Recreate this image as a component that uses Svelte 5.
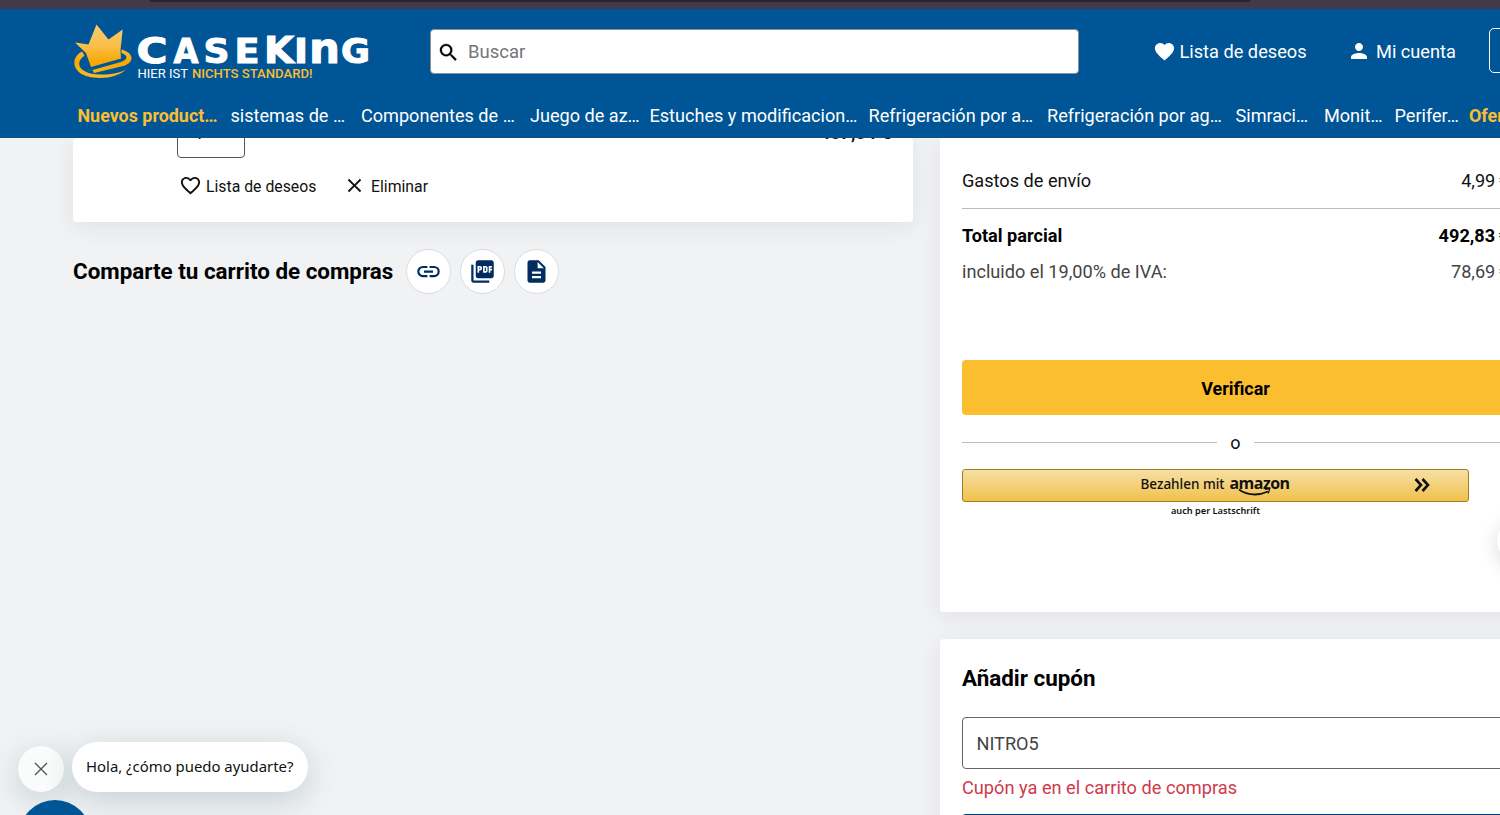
<script>
  const nav = [
    { t: 'Nuevos product…', x: 153, b: true },
    { t: 'sistemas de …', x: 130.5 },
    { t: 'Componentes de …', x: 169 },
    { t: 'Juego de az…', x: 119.5 },
    { t: 'Estuches y modificacion…', x: 219 },
    { t: 'Refrigeración por a…', x: 178.5 },
    { t: 'Refrigeración por ag…', x: 188.5 },
    { t: 'Simraci…', x: 88.5 },
    { t: 'Monit…', x: 70.5 },
    { t: 'Perifer…', x: 74.5 },
    { t: 'Ofertas', x: 80, b: true }
  ];
  const letters = [
    { c: 'C', x: 63.5, w: 31, s: 36 },
    { c: 'A', x: 100.5, w: 25, s: 33 },
    { c: 'S', x: 130.5, w: 26, s: 33 },
    { c: 'E', x: 161.5, w: 25, s: 33 },
    { c: 'K', x: 191, w: 30, s: 37 },
    { c: 'I', x: 221, w: 14, s: 33 },
    { c: 'n', x: 236, w: 31, s: 42.5 },
    { c: 'G', x: 268, w: 29, s: 33 }
  ];
</script>

<div class="page">
  <div class="chrome"><i></i></div>
  <header>
    <div class="top">
      <svg class="logo" width="300" height="60" viewBox="0 0 300 60">
        <defs>
          <linearGradient id="gold" gradientUnits="userSpaceOnUse" x1="0" y1="0" x2="0" y2="54">
            <stop offset="0" stop-color="#f8cc70" />
            <stop offset=".4" stop-color="#fabf4a" />
            <stop offset=".72" stop-color="#f7a800" />
            <stop offset="1" stop-color="#f8bb2c" />
          </linearGradient>
        </defs>
        <g fill="url(#gold)">
          <path d="M2 18.500 15.500 20.500 23.500.5 35.500 15.500 49.700 5.500 47.500 26 48 34.500 18 43 13 29Z" />
          <path d="M9 27.500C-4 34-2 54 27 54c11 0 20-3 26-8.500C47 49 39 50.500 28 50.500 8 50.500 0 40 11.500 31.500Z" />
          <path d="M48.500 25.500C62 29 62 40 48 42.500L21 49 19.500 46 46 38.500C56 36 55 31 48.500 29Z" />
        </g>
        {#each letters as l}
          <text x={l.x} y="38.500" class="brand" font-size={l.s} textLength={l.w} lengthAdjust="spacingAndGlyphs">{l.c}</text>
        {/each}
        <text x="64.500" y="53.500" class="tag" textLength="50.500" lengthAdjust="spacingAndGlyphs">HIER IST</text>
        <text x="119" y="53.500" class="tag tb" textLength="120.500" lengthAdjust="spacingAndGlyphs">NICHTS STANDARD!</text>
      </svg>
      <div class="search">
        <svg width="23" height="23" viewBox="0 0 24 24"><path stroke="#000" stroke-width=".3" d="M15.500 14h-.79l-.28-.27A6.470 6.470 0 0 0 16 9.500 6.500 6.500 0 1 0 9.500 16c1.610 0 3.090-.59 4.230-1.570l.27.28v.79l5 4.990L20.490 19zm-6 0a4.500 4.500 0 1 1 0-9 4.500 4.500 0 0 1 0 9z" /></svg>
        <span>Buscar</span>
      </div>
      <div class="link wish">
        <svg width="23" height="23" viewBox="0 0 24 24"><path fill="#fff" d="m12 21.350-1.450-1.320C5.400 15.360 2 12.280 2 8.500 2 5.420 4.420 3 7.500 3c1.740 0 3.410.81 4.500 2.090C13.090 3.810 14.760 3 16.500 3 19.580 3 22 5.420 22 8.500c0 3.780-3.400 6.860-8.550 11.540z" /></svg>
        <span>Lista de deseos</span>
      </div>
      <div class="link account">
        <svg width="24" height="24" viewBox="0 0 24 24"><path fill="#fff" d="M12 12c2.210 0 4-1.790 4-4s-1.790-4-4-4-4 1.790-4 4 1.790 4 4 4m0 2c-2.670 0-8 1.340-8 4v2h16v-2c0-2.660-5.330-4-8-4" /></svg>
        <span>Mi cuenta</span>
      </div>
      <div class="basket"></div>
    </div>
    <nav>
      {#each nav as n}
        <a class:bold={n.b} style="width:{n.x}px">{n.t}</a>
      {/each}
    </nav>
  </header>

  <main>
    <section class="left">
      <div class="card item">
        <div class="row1">
          <div class="qty"><span>1</span></div>
          <b class="price">487,84 €</b>
        </div>
        <div class="actions">
          <svg width="23" height="23" viewBox="0 0 24 24"><path fill="#111" d="M16.500 3c-1.740 0-3.410.81-4.500 2.090C10.910 3.810 9.240 3 7.500 3 4.420 3 2 5.420 2 8.500c0 3.780 3.400 6.860 8.550 11.540L12 21.350l1.450-1.320C18.600 15.360 22 12.280 22 8.500 22 5.420 19.580 3 16.500 3m-4.400 15.550-.1.100-.1-.1C7.140 14.240 4 11.390 4 8.500 4 6.500 5.500 5 7.500 5c1.540 0 3.040.99 3.570 2.360h1.870C13.460 5.990 14.960 5 16.500 5c2 0 3.500 1.500 3.500 3.500 0 2.890-3.140 5.740-7.900 10.050" /></svg>
          <span class="a1">Lista de deseos</span>
          <svg width="23" height="23" viewBox="0 0 24 24"><path fill="#111" d="M19 6.410 17.590 5 12 10.590 6.410 5 5 6.410 10.590 12 5 17.590 6.410 19 12 13.410 17.590 19 19 17.590 13.410 12z" /></svg>
          <span class="a2">Eliminar</span>
        </div>
      </div>
      <div class="share">
        <h2>Comparte tu carrito de compras</h2>
        <i class="round"><svg width="27" height="27" viewBox="0 0 24 24"><path d="M3.900 12c0-1.710 1.390-3.100 3.100-3.100h4V7H7a5 5 0 0 0 0 10h4v-1.900H7c-1.710 0-3.100-1.390-3.100-3.100M8 13h8v-2H8zm9-6h-4v1.900h4a3.100 3.100 0 0 1 0 6.200h-4V17h4a5 5 0 0 0 0-10" /></svg></i>
        <i class="round"><svg width="27" height="27" viewBox="0 0 24 24"><path d="M20 2H8c-1.100 0-2 .9-2 2v12c0 1.100.9 2 2 2h12c1.100 0 2-.9 2-2V4c0-1.100-.9-2-2-2m-8.500 7.500c0 .83-.67 1.500-1.500 1.500H9v2H7.500V7H10c.83 0 1.500.67 1.500 1.500zm5 2c0 .83-.67 1.500-1.500 1.500h-2.500V7H15c.83 0 1.500.67 1.500 1.500zm4-3H19v1h1.500V11H19v2h-1.500V7h3zM9 9.500h1v-1H9zM4 6H2v14c0 1.100.9 2 2 2h14v-2H4zm10 5.500h1v-3h-1z" /></svg></i>
        <i class="round"><svg width="27" height="27" viewBox="0 0 24 24"><path d="M14 2H6c-1.100 0-2 .9-2 2v16c0 1.100.9 2 2 2h12c1.100 0 2-.9 2-2V8zm2 16H8v-2h8zm0-4H8v-2h8zm-3-5V3.500L18.500 9z" /></svg></i>
      </div>
    </section>

    <aside>
      <div class="card summary">
        <div class="line ship"><span>Gastos de envío</span><em>4,99 €</em></div>
        <hr />
        <div class="line total"><span>Total parcial</span><em>492,83 €</em></div>
        <div class="line vat"><span>incluido el 19,00% de IVA:</span><em>78,69 €</em></div>
        <button class="check"><span>Verificar</span></button>
        <div class="or"><hr /><span>o</span><hr /></div>
        <div class="amz">
          <span class="pay">Bezahlen mit</span>
          <span class="az">amazon
            <svg width="36" height="9" viewBox="0 0 36 9"><path fill="none" stroke="#111" stroke-width="1.800" d="M1 1.500C9 7.500 20 8 30 3.500" /><path fill="none" stroke="#111" stroke-width="1.200" d="M27 1.500c3-1 5-.8 4.500 0 0 1.500-.7 2.500-1.500 4" /></svg>
          </span>
          <svg class="chev" width="16" height="14" viewBox="0 0 16 14"><path fill="none" stroke="#111" stroke-width="2.600" d="m1.500 1 5.500 6-5.500 6M8.500 1 14 7l-5.500 6" /></svg>
        </div>
        <p class="sub">auch per Lastschrift</p>
      </div>
      <div class="card coupon">
        <h2>Añadir cupón</h2>
        <div class="field"><span>NITRO5</span></div>
        <p class="err"><span>Cupón ya en el carrito de compras</span></p>
        <div class="apply"></div>
      </div>
    </aside>
  </main>

  <div class="chat">
    <i class="close"><svg width="14" height="14" viewBox="0 0 14 14"><path d="m1 1 12 12M13 1 1 13" stroke="#555" stroke-width="1.400" /></svg></i>
    <div class="bubble"><span>Hola, ¿cómo puedo ayudarte?</span></div>
  </div>
  <i class="launcher"></i>
  <i class="side"></i>
</div>

<style>
  :global(body) { margin: 0; overflow: hidden; }
  .page { position: relative; width: 1500px; height: 815px; overflow: hidden; background: #f1f2f4; font-family: Roboto, sans-serif; color: #111; }
  .chrome { height: 9px; background: #43394b; }
  .chrome i { display: block; width: 1100px; height: 2px; margin-left: 150px; background: #2b2233; }
  header { position: relative; z-index: 2; height: 129px; background: #005596; color: #fff; overflow: hidden; }
  .top { display: flex; height: 87px; align-items: flex-start; }
  .logo { flex: none; margin: 15px 0 0 73px; }
  .brand { font-family: "DejaVu Sans", sans-serif; font-weight: 700; fill: #fff; stroke: #fff; stroke-width: 1; }
  .tag { font-family: Roboto, sans-serif; font-size: 12.500px; fill: #fff; }
  .tb { fill: #fbbe32; font-weight: 500; }
  .search { flex: none; box-sizing: border-box; width: 649px; height: 45px; margin: 20px 0 0 57px; border: 1px solid #8b8f92; border-radius: 4px; background: #fff; display: flex; align-items: center; padding-left: 6px; font-size: 18.500px; color: #757575; }
  .search span { margin-left: 8px; }
  .search svg { margin-top: 2px; }
  .link { flex: none; display: flex; align-items: center; height: 44px; margin-top: 20px; font-size: 18.200px; white-space: nowrap; }
  .wish { margin-left: 73.500px; width: 180px; }
  .wish span { margin-left: 4px; }
  .account { margin-left: 14.500px; width: 123px; }
  .account span { margin-left: 5px; }
  .basket { flex: none; box-sizing: border-box; width: 80px; height: 45px; margin: 19px 0 0 18.500px; border: 1px solid #fff; border-radius: 5px; }
  nav { display: flex; padding-left: 77.500px; font-size: 18.100px; line-height: 40px; }
  nav a { flex: none; white-space: nowrap; }
  .bold { color: #fbbe32; font-weight: 700; font-size: 17.900px; }
  main { display: flex; align-items: flex-start; }
  .card { background: #fff; border-radius: 4px; box-shadow: 0 5px 22px rgba(30,35,45,.08); box-sizing: border-box; }
  .left { flex: none; width: 840px; margin-left: 73px; }
  .item { height: 84px; }
  .row1 { display: flex; justify-content: space-between; height: 20px; padding: 0 22px 0 104px; }
  .qty { box-sizing: border-box; width: 68px; height: 54px; margin-top: -34px; border: 1px solid #555; border-radius: 4px; padding: 17px 0 0 16px; font-size: 18px; }
  .price { font-size: 18.100px; margin-top: -16px; }
  .actions { display: flex; align-items: center; padding: 16px 0 0 106px; height: 23px; font-size: 15.800px; }
  .actions span { padding-top: 1px; }
  .a1 { margin-left: 4px; width: 137px; }
  .a2 { margin-left: 5px; }
  .share { display: flex; align-items: center; height: 46px; margin-top: 26.500px; }
  h2 { margin: 0; font-size: 22.400px; font-weight: 700; line-height: 28px; color: #000; white-space: nowrap; }
  .share h2 { width: 333.400px; margin-top: -1px; }
  .round { flex: none; box-sizing: border-box; width: 45px; height: 45px; margin-right: 9px; border: 1px solid #d9dce1; border-radius: 50%; background: #fff; display: grid; place-items: center; }
  .round path { fill: #002c5f; }
  aside { flex: none; width: 590px; margin-left: 27px; }
  .summary { height: 473.500px; padding: 30px 0 0 22px; border-top-left-radius: 0; }
  .line { display: flex; justify-content: space-between; width: 547px; line-height: 26px; font-size: 18.150px; color: #111; }
  .line em { font-style: normal; word-spacing: -1px; }
  hr { border: 0; height: 1px; background: #bbb; margin: 0; }
  .ship + hr { margin-top: 14px; width: 547px; }
  .total { margin-top: 14px; font-weight: 700; color: #000; }
  .vat { margin-top: 10px; color: #444; }
  .check { display: block; border: 0; border-radius: 4px; background: #fbbe2f; width: 547px; height: 55px; margin-top: 74.500px; font: 700 17.900px Roboto, sans-serif; color: #000; padding: 2px 0 0; }
  .or { display: flex; align-items: center; width: 547px; height: 20px; margin-top: 17.500px; font-size: 18px; }
  .or hr { flex: 1; }
  .or span { width: 37px; text-align: center; }
  .amz { position: relative; box-sizing: border-box; width: 507px; height: 33px; margin-top: 16.500px; border: 1px solid #a47d20; border-radius: 3px; background: linear-gradient(#f7dfa5, #f0c14b); display: flex; align-items: flex-start; padding: 4px 0 0 177.500px; line-height: 20px; }
  .pay { font: 500 13.500px/20px "Noto Sans", sans-serif; width: 89px; white-space: nowrap; color: #111; }
  .az { position: relative; font: 700 16px/18px "Open Sans", sans-serif; letter-spacing: -.55px; height: 18px; }
  .az svg { position: absolute; left: 8px; top: 14px; }
  .chev { position: absolute; left: 450.500px; top: 8px; }
  .sub { margin: 2px 0 0; width: 507px; text-align: center; font: 600 9.200px/14px "Noto Sans", sans-serif; }
  .coupon { height: 220px; margin-top: 27px; padding: 25px 0 0 22px; }
  .field { box-sizing: border-box; width: 547px; height: 52px; margin-top: 25.500px; border: 1px solid #666; border-radius: 4px; padding-left: 13.500px; font-size: 18.150px; line-height: 51px; color: #444; }
  .err { margin: 6px 0 0; font-size: 18.200px; line-height: 26px; color: #cf3a4a; }
  .apply { height: 40px; width: 547px; margin-top: 13px; border-radius: 4px; background: #003a70; }
  .chat { position: absolute; left: 18px; top: 742px; display: flex; align-items: center; }
  .close, .bubble { background: #fff; box-shadow: 0 8px 32px rgba(20,80,70,.2); }
  .close { width: 46px; height: 46px; border-radius: 50%; margin-top: 4px; display: grid; place-items: center; background: #fafbfb; }
  .bubble { margin-left: 8px; width: 236px; height: 50px; border-radius: 26px; box-sizing: border-box; padding-left: 14px; font: 14.900px/49px "Noto Sans", sans-serif; white-space: nowrap; color: #111; }
  .launcher { position: absolute; left: 19px; top: 800px; width: 72px; height: 72px; border-radius: 50%; background: #005596; }
  .side { position: absolute; left: 1497px; top: 518px; width: 46px; height: 46px; border-radius: 50%; background: #fff; box-shadow: 0 4px 20px rgba(0,0,0,.15); }
</style>
